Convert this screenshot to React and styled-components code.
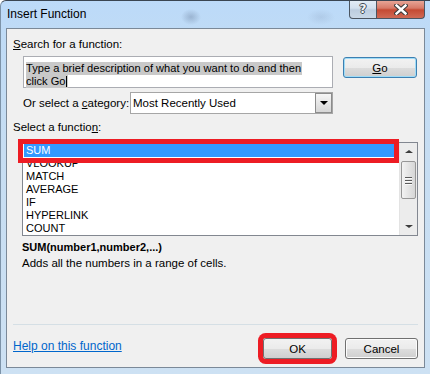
import React from 'react';
import styled, { createGlobalStyle } from 'styled-components';

const GlobalStyle = createGlobalStyle`
  html, body {
    margin: 0;
    padding: 0;
    background: #ffffff;
  }
  body {
    font-family: "Liberation Sans", Arial, sans-serif;
  }
`;

const Window = styled.div`
  width: 430px;
  height: 374px;
  box-sizing: border-box;
  display: flex;
  flex-direction: column;
  padding: 0 5px 6px 5px;
  border-top: 1px solid #3a4552;
  border-left: 1px solid #7d93a8;
  border-radius: 6px 0 0 0;
  background:
    radial-gradient(ellipse 10px 8px at 190px 16px, rgba(90, 110, 140, 0.35), transparent),
    radial-gradient(ellipse 14px 8px at 320px 16px, rgba(120, 140, 170, 0.2), transparent),
    linear-gradient(180deg, #bcdaf9 0%, #bfdbf6 8%, #c6ddf2 40%, #cde1f3 100%);
  overflow: hidden;
`;

const TitleBar = styled.div`
  height: 27px;
  display: flex;
  align-items: flex-start;
  flex-shrink: 0;
`;

const Title = styled.div`
  flex: 1;
  padding-left: 1px;
  font-size: 12px;
  line-height: 26px;
  color: #000;
`;

const CaptionButtons = styled.div`
  display: flex;
  margin-top: -1px;
`;

const CaptionButton = styled.div`
  width: ${p => p.$w}px;
  height: 19px;
  box-sizing: border-box;
  display: flex;
  align-items: center;
  justify-content: center;
  border: 1px solid #4b5561;
  border-top: none;
  border-left: ${p => (p.$close ? 'none' : '1px solid #4b5561')};
  border-radius: ${p => (p.$close ? '0 0 4px 0' : '0 0 0 4px')};
  background: ${p =>
    p.$close
      ? 'linear-gradient(180deg, #e9aa9c 0%, #d77a68 45%, #c54a33 55%, #d06a55 100%)'
      : 'linear-gradient(180deg, #e4edf6 0%, #d3e0ee 45%, #bccddf 55%, #c9d8e7 100%)'};
`;

const HelpGlyph = styled.span`
  font-family: "DejaVu Sans", sans-serif;
  font-weight: bold;
  font-size: 12px;
  color: #f4f4f4;
  text-shadow: 1px 0 0 #404a55, -1px 0 0 #404a55, 0 1px 0 #404a55, 0 -1px 0 #404a55;
`;

const Panel = styled.div`
  height: 340px;
  box-sizing: border-box;
  border: 1px solid #7b8998;
  background: #f0f0f0;
  display: flex;
  flex-direction: column;
`;

const Body = styled.div`
  padding: 0 6px;
  font-size: 11.5px;
  color: #000;
`;

const Label = styled.div`
  margin-top: ${p => p.$top}px;
  line-height: 15px;
  white-space: nowrap;
`;

const Row = styled.div`
  display: flex;
  align-items: ${p => p.$align || 'flex-start'};
  margin-top: 4px;
  padding-left: 10px;
  width: ${p => (p.$w ? `${p.$w}px` : 'auto')};
`;

const SearchBox = styled.div`
  width: 310px;
  height: 32px;
  box-sizing: border-box;
  border: 1px solid #abadb3;
  background: #fff;
  padding: 5px 0 0 2px;
  font-size: 11.1px;
`;

const SelLine = styled.div`
  width: fit-content;
  height: 13px;
  line-height: 13px;
  background: #c9c9c9;
  padding-right: 1px;
  white-space: nowrap;
  display: flex;
  align-items: center;
`;

const Caret = styled.span`
  display: inline-block;
  width: 1px;
  height: 11px;
  background: #000;
  margin-left: 1px;
`;

const Button = styled.div`
  width: ${p => p.$w}px;
  height: 21px;
  box-sizing: border-box;
  margin-left: ${p => p.$ml || '0px'};
  margin-top: ${p => p.$mt || 0}px;
  display: flex;
  align-items: center;
  justify-content: center;
  font-size: 11.5px;
  color: #000;
  border: 1px solid ${p => (p.$focus ? '#3c7fb1' : '#707070')};
  border-radius: 3px;
  background: linear-gradient(180deg, #f2f2f2 0%, #ebebeb 50%, #dddddd 51%, #cfcfcf 100%);
  box-shadow: ${p =>
    p.$mark
      ? '0 0 0 5px #ed1c24'
      : p.$focus
      ? 'inset 0 0 0 1px #9fdcf7'
      : 'inset 0 0 0 1px #fcfcfc'};
`;

const Combo = styled.div`
  width: 203px;
  height: 22px;
  box-sizing: border-box;
  margin-left: auto;
  border: 1px solid #a6a6a6;
  background: #fff;
  display: flex;
  align-items: center;
  padding-left: 2px;
`;

const ComboText = styled.span`
  flex: 1;
  line-height: 20px;
`;

const DropButton = styled.div`
  width: 17px;
  height: 20px;
  box-sizing: border-box;
  border: 1px solid #8c8c8c;
  background: linear-gradient(180deg, #f6f6f6 0%, #e6e6e6 50%, #d6d6d6 100%);
  display: flex;
  align-items: center;
  justify-content: center;
`;

const Triangle = styled.span`
  width: 0;
  height: 0;
  border-left: ${p => p.$size}px solid transparent;
  border-right: ${p => p.$size}px solid transparent;
  ${p => (p.$up ? 'border-bottom' : 'border-top')}: ${p => p.$h}px solid ${p => p.$color || '#000'};
`;

const ListBox = styled.div`
  position: relative;
  margin: 7px 0 0 9px;
  width: 396px;
  height: 94px;
  box-sizing: border-box;
  border: 1px solid #828790;
  background: #fff;
  display: flex;
`;

const Items = styled.div`
  flex: 1;
  padding: 1px 0 0 1px;
  overflow: hidden;
`;

const Item = styled.div`
  height: 13px;
  line-height: 13px;
  padding-left: 2px;
  font-size: 11px;
  color: ${p => (p.$selected ? '#fff' : '#000')};
  background: ${p => (p.$selected ? '#3399ff' : 'transparent')};
`;

const Annotation = styled.div`
  position: absolute;
  left: -5px;
  top: -4px;
  width: 381px;
  height: 24px;
  box-sizing: border-box;
  border: 5px solid #ed1c24;
  pointer-events: none;
`;

const ScrollBar = styled.div`
  width: 17px;
  background: #ececec;
  border-left: 1px solid #e3e3e3;
  display: flex;
  flex-direction: column;
  align-items: center;
`;

const ArrowBox = styled.div`
  width: 17px;
  height: 17px;
  display: flex;
  align-items: center;
  justify-content: center;
`;

const Thumb = styled.div`
  width: 15px;
  height: 38px;
  box-sizing: border-box;
  margin-top: 1px;
  border: 1px solid #979797;
  border-radius: 2px;
  background: linear-gradient(90deg, #f3f3f3 0%, #e4e4e4 50%, #d6d6d6 100%);
  display: flex;
  flex-direction: column;
  align-items: center;
  justify-content: center;
  gap: 2px;
`;

const Grip = styled.span`
  width: 7px;
  height: 1px;
  background: #5a5a5a;
  box-shadow: 0 1px 0 #fafafa;
`;

const Track = styled.div`
  flex: 1;
`;

const Formula = styled.div`
  margin: 3px 0 0 9px;
  font-size: 11px;
  font-weight: bold;
  line-height: 16px;
`;

const Description = styled.div`
  margin-left: 9px;
  line-height: 16px;
`;

const Footer = styled.div`
  margin: auto 6px 0 6px;
  border-top: 1px solid #d5dfe5;
  padding: 13px 0 8px 0;
  display: flex;
  align-items: flex-start;
`;

const HelpLink = styled.span`
  font-size: 12px;
  line-height: 16px;
  color: #0066cc;
  text-decoration: underline;
`;

const functions = ['SUM', 'VLOOKUP', 'MATCH', 'AVERAGE', 'IF', 'HYPERLINK', 'COUNT'];

function CloseIcon() {
  return (
    <svg width="14" height="11" viewBox="0 0 14 11">
      <path d="M2.5 1.5 L11.5 9.5 M11.5 1.5 L2.5 9.5" stroke="#3b3b3b" strokeWidth="4.5" strokeLinecap="square" />
      <path d="M2.5 1.5 L11.5 9.5 M11.5 1.5 L2.5 9.5" stroke="#ffffff" strokeWidth="2.4" strokeLinecap="square" />
    </svg>
  );
}

export default function App() {
  return (
    <>
      <GlobalStyle />
      <Window>
        <TitleBar>
          <Title>Insert Function</Title>
          <CaptionButtons>
            <CaptionButton $w={28}>
              <HelpGlyph>?</HelpGlyph>
            </CaptionButton>
            <CaptionButton $w={48} $close>
              <CloseIcon />
            </CaptionButton>
          </CaptionButtons>
        </TitleBar>

        <Panel>
          <Body>
            <Label $top={8}>
              <u>S</u>earch for a function:
            </Label>
            <Row>
              <SearchBox>
                <SelLine>Type a brief description of what you want to do and then</SelLine>
                <SelLine>
                  click Go
                  <Caret />
                </SelLine>
              </SearchBox>
              <Button $w={74} $ml="10px" $mt={1} $focus>
                <span>
                  <u>G</u>o
                </span>
              </Button>
            </Row>
            <Row $align="center" $w={310}>
              <span>
                Or select a <u>c</u>ategory:
              </span>
              <Combo>
                <ComboText>Most Recently Used</ComboText>
                <DropButton>
                  <Triangle $size={4} $h={4} />
                </DropButton>
              </Combo>
            </Row>
            <Label $top={6}>
              Select a functio<u>n</u>:
            </Label>
            <ListBox>
              <Items>
                {functions.map((name, i) => (
                  <Item key={name} $selected={i === 0}>
                    {name}
                  </Item>
                ))}
              </Items>
              <ScrollBar>
                <ArrowBox>
                  <Triangle $up $size={4} $h={3} $color="#3c3c3c" />
                </ArrowBox>
                <Thumb>
                  <Grip />
                  <Grip />
                  <Grip />
                </Thumb>
                <Track />
                <ArrowBox>
                  <Triangle $size={4} $h={3} $color="#3c3c3c" />
                </ArrowBox>
              </ScrollBar>
              <Annotation />
            </ListBox>
            <Formula>SUM(number1,number2,...)</Formula>
            <Description>Adds all the numbers in a range of cells.</Description>
          </Body>

          <Footer>
            <HelpLink>Help on this function</HelpLink>
            <Button $w={69} $ml="auto" $mark>
              OK
            </Button>
            <Button $w={73} $ml="13px">
              Cancel
            </Button>
          </Footer>
        </Panel>
      </Window>
    </>
  );
}
